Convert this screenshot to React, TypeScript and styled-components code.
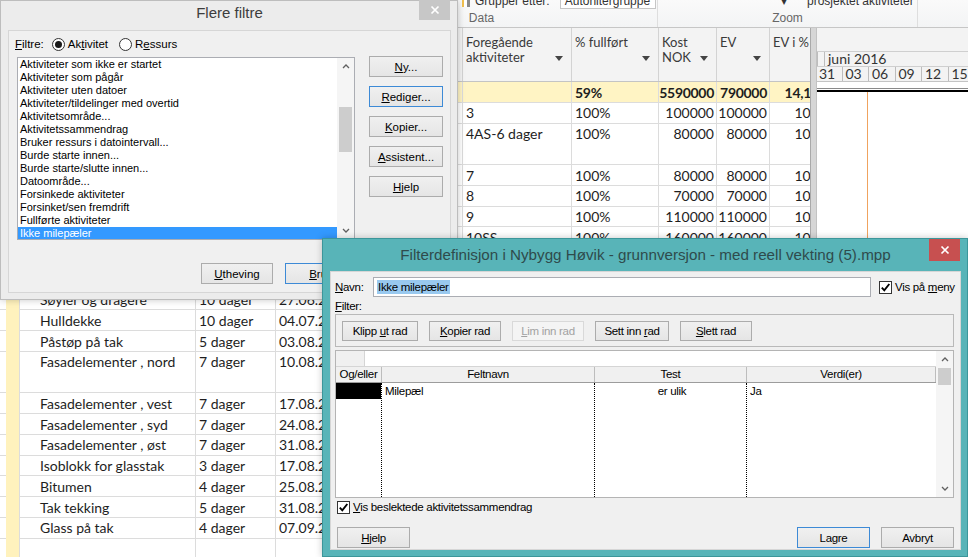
import React from "react";
import styled, { createGlobalStyle } from "styled-components";

const UI = `"Liberation Sans", Arial, sans-serif`;
const SHEET = `Lato, "Open Sans", sans-serif`;
// the filter definition dialog uses a tight, condensed looking face
const NARROW = `11.5px/14px ${UI}`;

const GlobalStyle = createGlobalStyle`
  html, body { margin: 0; padding: 0; background: #fff; }
  body { font-family: ${UI}; }
  * { box-sizing: border-box; }
  #root { width: 968px; height: 557px; }
`;

const Screen = styled.div`
  position: relative;
  width: 968px;
  height: 557px;
  overflow: hidden;
  background: #fff;
`;

/* ---------- background: MS Project window ---------- */

const ProjectWindow = styled.div`
  display: flex;
  flex-direction: column;
  height: 100%;
`;

const Ribbon = styled.div`
  height: 28px;
  flex: none;
  display: flex;
  background: linear-gradient(#fafafa, #f3f4f5);
  border-bottom: 1px solid #c6c6c6;
`;

const RibbonGroup = styled.div<{ $w: number }>`
  width: ${(p) => p.$w}px;
  flex: none;
  display: flex;
  flex-direction: column;
  border-right: 1px solid #dedede;
`;

const RibbonTop = styled.div<{ $pad: number }>`
  height: 9px;
  overflow: hidden;
  display: flex;
  align-items: flex-end;
  gap: 8px;
  padding-left: ${(p) => p.$pad}px;
  font: 12px/16px ${UI};
  color: #333;
  white-space: nowrap;
`;

const GroupIcon = styled.span`
  display: inline-block;
  width: 5px;
  height: 14px;
  background: #f2c14e;
  border-right: 3px solid #fff;
  box-shadow: 3px 0 0 #8a8a8a;
  margin-bottom: 2px;
`;

const RibbonInput = styled.span`
  display: inline-block;
  width: 96px;
  height: 16px;
  margin-left: 2px;
  padding-left: 4px;
  background: #fff;
  border: 1px solid #c6c6c6;
  font: 12px/14px ${UI};
  overflow: hidden;
`;

const GroupLabel = styled.div`
  flex: 1;
  display: flex;
  align-items: center;
  justify-content: center;
  font: 12px ${UI};
  color: #666;
`;

const Workspace = styled.div`
  flex: 1;
  display: flex;
  min-height: 0;
`;

const SheetPane = styled.div`
  width: 810px;
  flex: none;
  overflow: hidden;
`;

const SHEET_COLS = "6px 14px 176px 80px 80px 80px 27px 109px 87px 58px 53px 63px";

const HeaderRow = styled.div`
  display: grid;
  grid-template-columns: ${SHEET_COLS};
  width: max-content;
  height: 54px;
  background: #f3f3f3;
  border-bottom: 1px solid #c4c4c4;
`;

const HeaderCell = styled.div`
  display: flex;
  justify-content: space-between;
  align-items: flex-start;
  padding: 7px 8px 0 3px;
  border-right: 1px solid #d3d3d3;
  font: 13px/15px ${SHEET};
  color: #3a3a3a;
  overflow: hidden;
`;

const SortArrow = styled.svg`
  flex: none;
  margin-top: 21px;
`;

const SheetRow = styled.div<{ $tall?: boolean; $summary?: boolean }>`
  display: grid;
  grid-template-columns: ${SHEET_COLS};
  width: max-content;
  height: ${(p) => (p.$tall ? 41.5 : 20.75)}px;
  background: ${(p) => (p.$summary ? "#fff4c4" : "#fff")};
  font: ${(p) => (p.$summary ? 700 : 400)} 14px/18px ${SHEET};
  letter-spacing: ${(p) => (p.$summary ? "-0.3px" : "0")};
  color: #1e1e1e;
`;

const Cell = styled.div<{ $align?: "left" | "right"; $indent?: number }>`
  padding: 1.5px ${(p) => (p.$align === "right" ? 2 : 3)}px 0 ${(p) => (p.$align === "right" ? 0 : p.$indent ?? 3)}px;
  text-align: ${(p) => p.$align ?? "left"};
  border-right: 1px solid #dcdcdc;
  border-bottom: 1px solid #dcdcdc;
  white-space: nowrap;
  overflow: hidden;
`;

const IndicatorCell = styled.div`
  background: #fff2bd;
  border-right: 1px solid #dcdcdc;
`;

const Splitter = styled.div`
  width: 7px;
  flex: none;
  background: #d6d6d6;
  border-left: 1px solid #a9a9a9;
  border-right: 1px solid #c2c2c2;
`;

const GanttPane = styled.div`
  flex: 1;
  display: flex;
  flex-direction: column;
  overflow: hidden;
`;

const GanttHeader = styled.div`
  height: 54px;
  flex: none;
  display: flex;
  flex-direction: column;
  background: #f3f3f3;
  border-bottom: 1px solid #c4c4c4;
`;

const TierBlank = styled.div`
  height: 24px;
`;

const Tier = styled.div<{ $shift?: number }>`
  height: 15px;
  display: flex;
  margin-left: ${(p) => p.$shift ?? 0}px;
  border-top: 1px solid #cfcfcf;
  font: 14px/14px ${SHEET};
  color: #333;
  white-space: nowrap;
`;

const TierCell = styled.div<{ $w?: number }>`
  flex: ${(p) => (p.$w ? `0 0 ${p.$w}px` : "1")};
  padding-left: 3px;
  border-left: 1px solid #bdbdbd;
`;

const GanttBody = styled.svg`
  flex: 1;
  display: block;
`;

/* ---------- dialogs ---------- */

const Dialog = styled.div<{ $x: number; $y: number; $w: number; $h: number; $active?: boolean }>`
  position: absolute;
  left: ${(p) => p.$x}px;
  top: ${(p) => p.$y}px;
  width: ${(p) => p.$w}px;
  height: ${(p) => p.$h}px;
  display: flex;
  flex-direction: column;
  padding: 0 6px 6px 7px;
  background: ${(p) => (p.$active ? "#58b4b8" : "#ececec")};
  border: 1px solid ${(p) => (p.$active ? "#3c969a" : "#bdbdbd")};
  box-shadow: 0 0 7px rgba(0, 0, 0, 0.22);
`;

const TitleBar = styled.div<{ $h: number }>`
  height: ${(p) => p.$h}px;
  flex: none;
  display: grid;
  grid-template-columns: 1fr auto 1fr;
  align-items: start;
`;

const Title = styled.div<{ $size: number; $color: string; $top: number }>`
  grid-column: 2;
  padding-top: ${(p) => p.$top}px;
  font: ${(p) => p.$size}px/18px ${UI};
  color: ${(p) => p.$color};
  white-space: nowrap;
`;

const CloseButton = styled.div<{ $bg: string; $h: number; $top: number }>`
  grid-column: 3;
  justify-self: end;
  width: 31px;
  height: ${(p) => p.$h}px;
  margin-top: ${(p) => p.$top}px;
  margin-right: 1px;
  display: flex;
  align-items: center;
  justify-content: center;
  background: ${(p) => p.$bg};
`;

const Client = styled.div`
  flex: 1;
  background: #f0f0f0;
  border: 1px solid #d6d6d6;
`;

const Key = styled.span`
  text-decoration: underline;
  text-underline-offset: 1px;
`;

const WinButton = styled.div<{ $w: number; $h?: number; $default?: boolean; $disabled?: boolean; $narrow?: boolean }>`
  width: ${(p) => p.$w}px;
  height: ${(p) => p.$h ?? 21}px;
  flex: none;
  display: flex;
  align-items: center;
  justify-content: center;
  border: 1px solid ${(p) => (p.$default ? "#3d8ad6" : p.$disabled ? "#d9d9d9" : "#acacac")};
  background: ${(p) => (p.$disabled ? "#f4f4f4" : "linear-gradient(#f0f0f0, #e5e5e5)")};
  color: ${(p) => (p.$disabled ? "#a2a2a2" : "#000")};
  font: ${(p) => (p.$narrow ? NARROW : `11.5px ${UI}`)};
  letter-spacing: ${(p) => (p.$narrow ? "-0.3px" : "0")};
  white-space: pre;
  overflow: hidden;
`;

const Label = styled.span<{ $narrow?: boolean }>`
  font: ${(p) => (p.$narrow ? NARROW : `11.5px ${UI}`)};
  letter-spacing: ${(p) => (p.$narrow ? "-0.3px" : "0")};
  color: #000;
  white-space: nowrap;
`;

/* More filters dialog */

const FiltersBody = styled.div`
  display: grid;
  grid-template-columns: 338px 74px;
  column-gap: 14px;
  padding: 3px 0 0 8px;
`;

const FilterTypeRow = styled.div`
  grid-column: 1 / -1;
  height: 20px;
  display: flex;
  align-items: center;
  gap: 8px;
  margin-left: -2px;
  margin-bottom: 3px;
`;

const RadioOption = styled.div`
  display: flex;
  align-items: center;
  gap: 3px;
  margin-right: 3px;
`;

const Radio = styled.span<{ $on?: boolean }>`
  width: 13px;
  height: 13px;
  border-radius: 50%;
  border: 1px solid #333;
  background: #fff;
  display: flex;
  align-items: center;
  justify-content: center;
  &::after {
    content: "";
    width: 7px;
    height: 7px;
    border-radius: 50%;
    background: ${(p) => (p.$on ? "#1a1a1a" : "transparent")};
  }
`;

const ListBox = styled.div`
  height: 183px;
  display: flex;
  background: #fff;
  border: 1px solid #abadb3;
`;

const ListItems = styled.div`
  flex: 1;
  display: flex;
  flex-direction: column;
  overflow: hidden;
`;

const ListItem = styled.div<{ $selected?: boolean }>`
  height: 13px;
  flex: none;
  padding-left: 2px;
  font: 11px/13px ${UI};
  color: ${(p) => (p.$selected ? "#fff" : "#000")};
  background: ${(p) => (p.$selected ? "#3399ff" : "transparent")};
  white-space: nowrap;
`;

const ScrollBar = styled.div`
  width: 17px;
  flex: none;
  display: flex;
  flex-direction: column;
  background: #f5f5f5;
`;

const ScrollArrow = styled.div`
  height: 17px;
  flex: none;
  display: flex;
  align-items: center;
  justify-content: center;
`;

const ScrollTrack = styled.div`
  flex: 1;
  padding: 0 2px;
`;

const ScrollThumb = styled.div<{ $top: number; $h: number }>`
  margin-top: ${(p) => p.$top}px;
  height: ${(p) => p.$h}px;
  background: #cdcdcd;
`;

const ButtonStack = styled.div`
  display: flex;
  flex-direction: column;
  gap: 9px;
  margin-top: -1px;
`;

const DialogFooter = styled.div<{ $gap: number; $top: number }>`
  grid-column: 1 / -1;
  display: flex;
  justify-content: flex-end;
  gap: ${(p) => p.$gap}px;
  margin-top: ${(p) => p.$top}px;
`;

/* Filter definition dialog */

const DefBody = styled.div`
  display: flex;
  flex-direction: column;
  padding: 5px 6px 0 4px;
`;

const NameRow = styled.div`
  height: 20px;
  display: flex;
  align-items: center;
`;

const NameLabel = styled(Label)`
  width: 38px;
  flex: none;
`;

const TextField = styled.div`
  width: 498px;
  height: 20px;
  flex: none;
  display: flex;
  align-items: center;
  padding-left: 3px;
  background: #fff;
  border: 1px solid #abadb3;
  margin-right: 8px;
`;

const Selected = styled.span`
  background: #99c9ef;
  font: ${NARROW};
  letter-spacing: -0.3px;
  color: #000;
  padding: 0 1px;
`;

const CheckOption = styled.div`
  display: flex;
  align-items: center;
  gap: 3px;
`;

const CheckBox = styled.span`
  width: 13px;
  height: 13px;
  flex: none;
  display: flex;
  align-items: center;
  justify-content: center;
  background: #fff;
  border: 1px solid #333;
`;

const FilterCaption = styled.div`
  height: 14px;
  margin-top: 2px;
  display: flex;
  align-items: center;
`;

const ToolGroup = styled.div`
  height: 33px;
  margin-top: 1px;
  display: flex;
  align-items: center;
  gap: 11px;
  padding-left: 6px;
  border: 1px solid #b9b9b9;
`;

const CriteriaGrid = styled.div`
  height: 148px;
  margin-top: 3px;
  display: flex;
  background: #fff;
  border: 1px solid #b4b4b4;
`;

const CriteriaMain = styled.div`
  flex: 1;
  display: flex;
  flex-direction: column;
`;

const EditRow = styled.div`
  height: 16px;
  flex: none;
  display: flex;
  border-bottom: 1px solid #d5d5d5;
`;

const EditCorner = styled.div`
  width: 29px;
  background: #f0f0f0;
  border-right: 1px solid #d5d5d5;
`;

const CRIT_COLS = "46px 213px 152px 1fr";

const CriteriaHead = styled.div`
  height: 16px;
  flex: none;
  display: grid;
  grid-template-columns: ${CRIT_COLS};
  background: #f0f0f0;
  border-bottom: 1px solid #9c9c9c;
`;

const HeadCell = styled.div`
  text-align: center;
  font: 11.5px/15px ${UI};
  letter-spacing: -0.3px;
  color: #000;
  border-right: 1px solid #bdbdbd;
  white-space: nowrap;
  overflow: hidden;
`;

const CriteriaRows = styled.div`
  flex: 1;
  display: grid;
  grid-template-columns: ${CRIT_COLS};
`;

const CritColumn = styled.div<{ $last?: boolean }>`
  border-right: ${(p) => (p.$last ? "none" : "1px dotted #000")};
`;

const CritCell = styled.div<{ $center?: boolean; $black?: boolean }>`
  height: 16px;
  padding-left: 3px;
  text-align: ${(p) => (p.$center ? "center" : "left")};
  font: 11.5px/16px ${UI};
  letter-spacing: -0.3px;
  background: ${(p) => (p.$black ? "#000" : "transparent")};
  white-space: nowrap;
`;

const RelatedRow = styled.div`
  height: 14px;
  margin-top: 2px;
  padding-left: 2px;
  display: flex;
  align-items: center;
`;

const DefFooter = styled.div`
  margin-top: 13px;
  display: flex;
  align-items: center;
  gap: 11px;
  padding-left: 2px;
`;

const Spacer = styled.div`
  flex: 1;
`;

/* ---------- icons ---------- */

const Chevron = ({ down }: { down?: boolean }) => (
  <svg width="8" height="5" viewBox="0 0 8 5">
    <polyline
      points={down ? "1,1 4,4 7,1" : "1,4 4,1 7,4"}
      fill="none"
      stroke="#606060"
      strokeWidth="1.3"
    />
  </svg>
);

const CloseGlyph = () => (
  <svg width="10" height="10" viewBox="0 0 10 10">
    <path d="M1.5 1.5 L8.5 8.5 M8.5 1.5 L1.5 8.5" stroke="#fff" strokeWidth="1.7" />
  </svg>
);

const Check = () => (
  <svg width="11" height="11" viewBox="0 0 11 11">
    <path d="M1.8 5.6 L4.3 8.3 L9.3 2" fill="none" stroke="#000" strokeWidth="1.9" />
  </svg>
);

const Arrow = () => (
  <SortArrow width="8" height="5" viewBox="0 0 8 5">
    <path d="M0 0 H8 L4 5 Z" fill="#444" />
  </SortArrow>
);

/* ---------- data ---------- */

type Task = {
  name: string;
  dur: string;
  start: string;
  finish: string;
  pred: string;
  pct: string;
  cost: string;
  ev: string;
  evp: string;
  tall?: boolean;
  summary?: boolean;
};

const t = (
  name: string,
  dur: string,
  start: string,
  finish: string,
  pred = "",
  pct = "0%",
  cost = "",
  ev = "",
  evp = "",
  tall = false
): Task => ({ name, dur, start, finish, pred, pct, cost, ev, evp, tall });

const tasks: Task[] = [
  { ...t("Nybygg Høvik", "118 dager", "02.05.2016", "14.10.2016", "", "59%", "5590000", "790000", "14,13%"), summary: true },
  t("Prosjektering", "10 dager", "02.05.2016", "13.05.2016", "3", "100%", "100000", "100000", "100%"),
  t("Graving og sprenging", "8 dager", "09.05.2016", "18.05.2016", "4AS-6 dager", "100%", "80000", "80000", "100%", true),
  t("Fundamentering", "6 dager", "19.05.2016", "26.05.2016", "7", "100%", "80000", "80000", "100%"),
  t("Grunnmur", "6 dager", "27.05.2016", "03.06.2016", "8", "100%", "70000", "70000", "100%"),
  t("Støp av gulv", "5 dager", "06.06.2016", "10.06.2016", "9", "100%", "110000", "110000", "100%"),
  t("Råbygg", "5 dager", "06.06.2016", "10.06.2016", "10SS", "100%", "160000", "160000", "100%"),
  t("Bæresystem", "8 dager", "13.06.2016", "22.06.2016", "11", "50%", "150000", "75000", "50%"),
  t("Trapper", "3 dager", "23.06.2016", "27.06.2016", "13", "0%", "60000", "0", "0%"),
  t("Søyler og dragere", "10 dager", "27.06.2016", "08.07.2016", "14", "0%", "300000", "0", "0%"),
  t("Hulldekke", "10 dager", "04.07.2016", "15.07.2016", "15SS+5 dager", "0%", "450000", "0", "0%"),
  t("Påstøp på tak", "5 dager", "03.08.2016", "09.08.2016", "16", "0%", "90000", "0", "0%"),
  t("Fasadelementer , nord", "7 dager", "10.08.2016", "18.08.2016", "17", "0%", "250000", "0", "0%", true),
  t("Fasadelementer , vest", "7 dager", "17.08.2016", "25.08.2016", "18FS-2 dager", "0%", "250000", "0", "0%"),
  t("Fasadelementer , syd", "7 dager", "24.08.2016", "01.09.2016", "19FS-2 dager", "0%", "250000", "0", "0%"),
  t("Fasadelementer , øst", "7 dager", "31.08.2016", "08.09.2016", "20FS-2 dager", "0%", "250000", "0", "0%"),
  t("Isoblokk for glasstak", "3 dager", "17.08.2016", "19.08.2016", "17", "0%", "40000", "0", "0%"),
  t("Bitumen", "4 dager", "25.08.2016", "30.08.2016", "22", "0%", "60000", "0", "0%"),
  t("Tak tekking", "5 dager", "31.08.2016", "06.09.2016", "23", "0%", "120000", "0", "0%"),
  t("Glass på tak", "4 dager", "07.09.2016", "12.09.2016", "24", "0%", "180000", "0", "0%"),
  t("", "", "", "", "", "", "", "", ""),
  t("", "", "", "", "", "", "", "", ""),
];

const headers: { label: React.ReactNode; arrow?: boolean }[] = [
  { label: "" },
  { label: "" },
  { label: "Aktivitetsnavn", arrow: true },
  { label: "Varighet", arrow: true },
  { label: "Start", arrow: true },
  { label: "Slutt", arrow: true },
  { label: "" },
  { label: <>Foregående<br />aktiviteter</>, arrow: true },
  { label: "% fullført", arrow: true },
  { label: <>Kost<br />NOK</>, arrow: true },
  { label: "EV", arrow: true },
  { label: "EV i %", arrow: true },
];

const filterNames = [
  "Aktiviteter som ikke er startet",
  "Aktiviteter som pågår",
  "Aktiviteter uten datoer",
  "Aktiviteter/tildelinger med overtid",
  "Aktivitetsområde...",
  "Aktivitetssammendrag",
  "Bruker ressurs i datointervall...",
  "Burde starte innen...",
  "Burde starte/slutte innen...",
  "Datoområde...",
  "Forsinkede aktiviteter",
  "Forsinket/sen fremdrift",
  "Fullførte aktiviteter",
  "Ikke milepæler",
];

const days = ["31", "03", "06", "09", "12", "15", "18"];

/* ---------- parts ---------- */

function ProjectBackground() {
  return (
    <ProjectWindow>
      <Ribbon>
        <RibbonGroup $w={306} />
        <RibbonGroup $w={352}>
          <RibbonTop $pad={156}>
            <GroupIcon />
            <span>Grupper etter:</span>
            <RibbonInput>Autonitergruppe</RibbonInput>
          </RibbonTop>
          <GroupLabel>Data</GroupLabel>
        </RibbonGroup>
        <RibbonGroup $w={260}>
          <RibbonTop $pad={123}>
            <span>▾</span>
            <span style={{ marginLeft: 12 }}>prosjektet aktiviteter</span>
          </RibbonTop>
          <GroupLabel>Zoom</GroupLabel>
        </RibbonGroup>
      </Ribbon>
      <Workspace>
        <SheetPane>
          <HeaderRow>
            {headers.map((h, i) => (
              <HeaderCell key={i}>
                <span>{h.label}</span>
                {h.arrow && <Arrow />}
              </HeaderCell>
            ))}
          </HeaderRow>
          {tasks.map((task, i) => (
            <SheetRow key={i} $tall={task.tall} $summary={task.summary}>
              <Cell />
              <IndicatorCell />
              <Cell $indent={task.summary ? 3 : 20}>{task.name}</Cell>
              <Cell>{task.dur}</Cell>
              <Cell>{task.start}</Cell>
              <Cell>{task.finish}</Cell>
              <Cell />
              <Cell>{task.pred}</Cell>
              <Cell>{task.pct}</Cell>
              <Cell $align="right">{task.cost}</Cell>
              <Cell $align="right">{task.ev}</Cell>
              <Cell $align="right">{task.evp}</Cell>
            </SheetRow>
          ))}
        </SheetPane>
        <Splitter />
        <GanttPane>
          <GanttHeader>
            <TierBlank />
            <Tier>
              <TierCell $w={7} />
              <TierCell>juni 2016</TierCell>
            </Tier>
            <Tier $shift={-2}>
              {days.map((d) => (
                <TierCell key={d} $w={26.5}>
                  {d}
                </TierCell>
              ))}
            </Tier>
          </GanttHeader>
          <GanttBody>
            <line x1="0" y1="6.5" x2="151" y2="6.5" stroke="#8a8a8a" strokeWidth="1" />
            <line x1="0" y1="9" x2="151" y2="9" stroke="#000" strokeWidth="2" />
            <line x1="50.5" y1="10" x2="50.5" y2="480" stroke="#f0a35e" strokeWidth="1" />
          </GanttBody>
        </GanttPane>
      </Workspace>
    </ProjectWindow>
  );
}

function MoreFiltersDialog() {
  return (
    <Dialog $x={0} $y={0} $w={458} $h={300}>
      <TitleBar $h={29}>
        <Title $size={15} $color="#3d3d3d" $top={3}>Flere filtre</Title>
        <CloseButton $bg="#c7c7c7" $h={20} $top={-1}>
          <CloseGlyph />
        </CloseButton>
      </TitleBar>
      <Client>
        <FiltersBody>
          <FilterTypeRow>
            <Label><Key>F</Key>iltre:</Label>
            <RadioOption>
              <Radio $on />
              <Label>Ak<Key>t</Key>ivitet</Label>
            </RadioOption>
            <RadioOption>
              <Radio />
              <Label>R<Key>e</Key>ssurs</Label>
            </RadioOption>
          </FilterTypeRow>
          <ListBox>
            <ListItems>
              {filterNames.map((n, i) => (
                <ListItem key={n} $selected={i === filterNames.length - 1}>
                  {n}
                </ListItem>
              ))}
            </ListItems>
            <ScrollBar>
              <ScrollArrow>
                <Chevron />
              </ScrollArrow>
              <ScrollTrack>
                <ScrollThumb $top={32} $h={45} />
              </ScrollTrack>
              <ScrollArrow>
                <Chevron down />
              </ScrollArrow>
            </ScrollBar>
          </ListBox>
          <ButtonStack>
            <WinButton $w={74}><span><Key>N</Key>y...</span></WinButton>
            <WinButton $w={74} $default><span><Key>R</Key>ediger...</span></WinButton>
            <WinButton $w={74}><span><Key>K</Key>opier...</span></WinButton>
            <WinButton $w={74}><span><Key>A</Key>ssistent...</span></WinButton>
            <WinButton $w={74}><span><Key>H</Key>jelp</span></WinButton>
          </ButtonStack>
          <DialogFooter $gap={12} $top={23}>
            <WinButton $w={72}><span><Key>U</Key>theving</span></WinButton>
            <WinButton $w={72} $default><span><Key>B</Key>ruk</span></WinButton>
            <WinButton $w={74}><span>Avbryt</span></WinButton>
          </DialogFooter>
        </FiltersBody>
      </Client>
    </Dialog>
  );
}

function FilterDefinitionDialog() {
  return (
    <Dialog $x={322} $y={238} $w={646} $h={319} $active>
      <TitleBar $h={32}>
        <Title $size={15.2} $color="#2f4b4c" $top={7}>
          Filterdefinisjon i Nybygg Høvik - grunnversjon - med reell vekting (5).mpp
        </Title>
        <CloseButton $bg="#c75050" $h={22} $top={0}>
          <CloseGlyph />
        </CloseButton>
      </TitleBar>
      <Client>
        <DefBody>
          <NameRow>
            <NameLabel $narrow><Key>N</Key>avn:</NameLabel>
            <TextField>
              <Selected>Ikke milepæler</Selected>
            </TextField>
            <CheckOption>
              <CheckBox><Check /></CheckBox>
              <Label $narrow>Vis på <Key>m</Key>eny</Label>
            </CheckOption>
          </NameRow>
          <FilterCaption>
            <Label $narrow><Key>F</Key>ilter:</Label>
          </FilterCaption>
          <ToolGroup>
            <WinButton $narrow $w={76} $h={20}><span>Klipp <Key>u</Key>t rad</span></WinButton>
            <WinButton $narrow $w={72} $h={20}><span><Key>K</Key>opier rad</span></WinButton>
            <WinButton $narrow $w={72} $h={20} $disabled><span><Key>L</Key>im inn rad</span></WinButton>
            <WinButton $narrow $w={74} $h={20}><span>Sett inn <Key>r</Key>ad</span></WinButton>
            <WinButton $narrow $w={72} $h={20}><span><Key>S</Key>lett rad</span></WinButton>
          </ToolGroup>
          <CriteriaGrid>
            <CriteriaMain>
              <EditRow>
                <EditCorner />
              </EditRow>
              <CriteriaHead>
                <HeadCell>Og/eller</HeadCell>
                <HeadCell>Feltnavn</HeadCell>
                <HeadCell>Test</HeadCell>
                <HeadCell>Verdi(er)</HeadCell>
              </CriteriaHead>
              <CriteriaRows>
                <CritColumn>
                  <CritCell $black />
                </CritColumn>
                <CritColumn>
                  <CritCell>Milepæl</CritCell>
                </CritColumn>
                <CritColumn>
                  <CritCell $center>er ulik</CritCell>
                </CritColumn>
                <CritColumn $last>
                  <CritCell>Ja</CritCell>
                </CritColumn>
              </CriteriaRows>
            </CriteriaMain>
            <ScrollBar>
              <ScrollArrow>
                <Chevron />
              </ScrollArrow>
              <ScrollTrack>
                <ScrollThumb $top={0} $h={17} />
              </ScrollTrack>
              <ScrollArrow>
                <Chevron down />
              </ScrollArrow>
            </ScrollBar>
          </CriteriaGrid>
          <RelatedRow>
            <CheckOption>
              <CheckBox><Check /></CheckBox>
              <Label $narrow><Key>V</Key>is beslektede aktivitetssammendrag</Label>
            </CheckOption>
          </RelatedRow>
          <DefFooter>
            <WinButton $narrow $w={73}><span><Key>H</Key>jelp</span></WinButton>
            <Spacer />
            <WinButton $narrow $w={73} $default><span>Lagre</span></WinButton>
            <WinButton $narrow $w={73}><span>Avbryt</span></WinButton>
          </DefFooter>
        </DefBody>
      </Client>
    </Dialog>
  );
}

export default function App() {
  return (
    <>
      <GlobalStyle />
      <Screen>
        <ProjectBackground />
        <MoreFiltersDialog />
        <FilterDefinitionDialog />
      </Screen>
    </>
  );
}
